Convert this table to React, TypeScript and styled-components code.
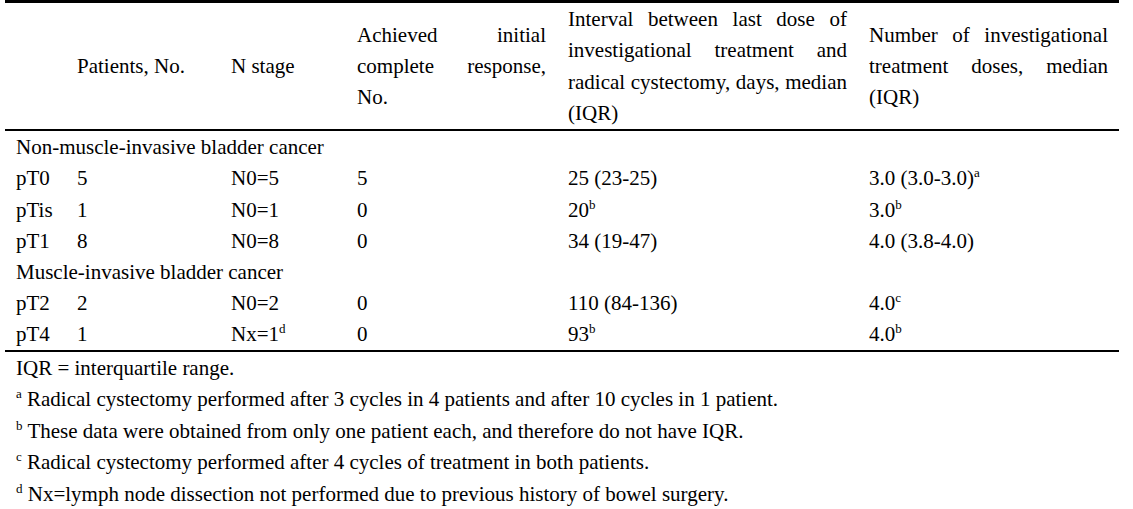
import React from "react";
import styled, { createGlobalStyle } from "styled-components";

const Global = createGlobalStyle`
  html, body { margin: 0; padding: 0; background: #fff; }
  body { font-family: "Liberation Serif", "Times New Roman", serif; color: #000; }
`;

const Page = styled.div`
  padding: 0 0 0 5px;
  width: 1114px;
`;

const Table = styled.table`
  width: 1114px;
  border-collapse: collapse;
  table-layout: fixed;
  font-size: 21px;
  line-height: 31.3px;
  border-top: 3px solid #000;
  border-bottom: 2px solid #000;
`;

const HeadRow = styled.tr`
  border-bottom: 2px solid #000;
`;

const Th = styled.th<{ $justify?: boolean }>`
  font-weight: normal;
  padding: 1px 11px 0;
  vertical-align: middle;
  text-align: ${(p) => (p.$justify ? "justify" : "left")};
  text-align-last: left;
`;

const Td = styled.td`
  padding: 1px 11px 0;
  line-height: 30.2px;
  text-align: left;
  white-space: nowrap;
`;

const Sup = styled.sup`
  font-size: 0.62em;
  line-height: 0;
  vertical-align: 0.58em;
`;

const Notes = styled.div`
  padding: 1px 11px 0;
  font-size: 21px;
  line-height: 31.5px;
`;

const Note = styled.div`
  white-space: nowrap;
`;

type Row =
  | { kind: "section"; label: string }
  | {
      kind: "data";
      t: string;
      n: string;
      stage: React.ReactNode;
      cr: string;
      interval: React.ReactNode;
      doses: React.ReactNode;
    };

const rows: Row[] = [
  { kind: "section", label: "Non-muscle-invasive bladder cancer" },
  { kind: "data", t: "pT0", n: "5", stage: "N0=5", cr: "5", interval: "25 (23-25)", doses: <>3.0 (3.0-3.0)<Sup>a</Sup></> },
  { kind: "data", t: "pTis", n: "1", stage: "N0=1", cr: "0", interval: <>20<Sup>b</Sup></>, doses: <>3.0<Sup>b</Sup></> },
  { kind: "data", t: "pT1", n: "8", stage: "N0=8", cr: "0", interval: "34 (19-47)", doses: "4.0 (3.8-4.0)" },
  { kind: "section", label: "Muscle-invasive bladder cancer" },
  { kind: "data", t: "pT2", n: "2", stage: "N0=2", cr: "0", interval: "110 (84-136)", doses: <>4.0<Sup>c</Sup></> },
  { kind: "data", t: "pT4", n: "1", stage: <>Nx=1<Sup>d</Sup></>, cr: "0", interval: <>93<Sup>b</Sup></>, doses: <>4.0<Sup>b</Sup></> },
];

export default function App() {
  return (
    <Page>
      <Global />
      <Table>
        <colgroup>
          <col style={{ width: 61 }} />
          <col style={{ width: 154 }} />
          <col style={{ width: 126 }} />
          <col style={{ width: 211 }} />
          <col style={{ width: 301 }} />
          <col style={{ width: 261 }} />
        </colgroup>
        <thead>
          <HeadRow>
            <Th></Th>
            <Th>Patients, No.</Th>
            <Th>N stage</Th>
            <Th $justify>Achieved initial complete response, No.</Th>
            <Th $justify>
              Interval between last dose of investigational treatment and radical cystectomy, days, median (IQR)
            </Th>
            <Th $justify>Number of investigational treatment doses, median (IQR)</Th>
          </HeadRow>
        </thead>
        <tbody>
          {rows.map((r, i) =>
            r.kind === "section" ? (
              <tr key={i}>
                <Td colSpan={6}>{r.label}</Td>
              </tr>
            ) : (
              <tr key={i}>
                <Td>{r.t}</Td>
                <Td>{r.n}</Td>
                <Td>{r.stage}</Td>
                <Td>{r.cr}</Td>
                <Td>{r.interval}</Td>
                <Td>{r.doses}</Td>
              </tr>
            )
          )}
        </tbody>
      </Table>
      <Notes>
        <Note>IQR = interquartile range.</Note>
        <Note><Sup>a</Sup> Radical cystectomy performed after 3 cycles in 4 patients and after 10 cycles in 1 patient.</Note>
        <Note><Sup>b</Sup> These data were obtained from only one patient each, and therefore do not have IQR.</Note>
        <Note><Sup>c</Sup> Radical cystectomy performed after 4 cycles of treatment in both patients.</Note>
        <Note><Sup>d</Sup> Nx=lymph node dissection not performed due to previous history of bowel surgery.</Note>
      </Notes>
    </Page>
  );
}
